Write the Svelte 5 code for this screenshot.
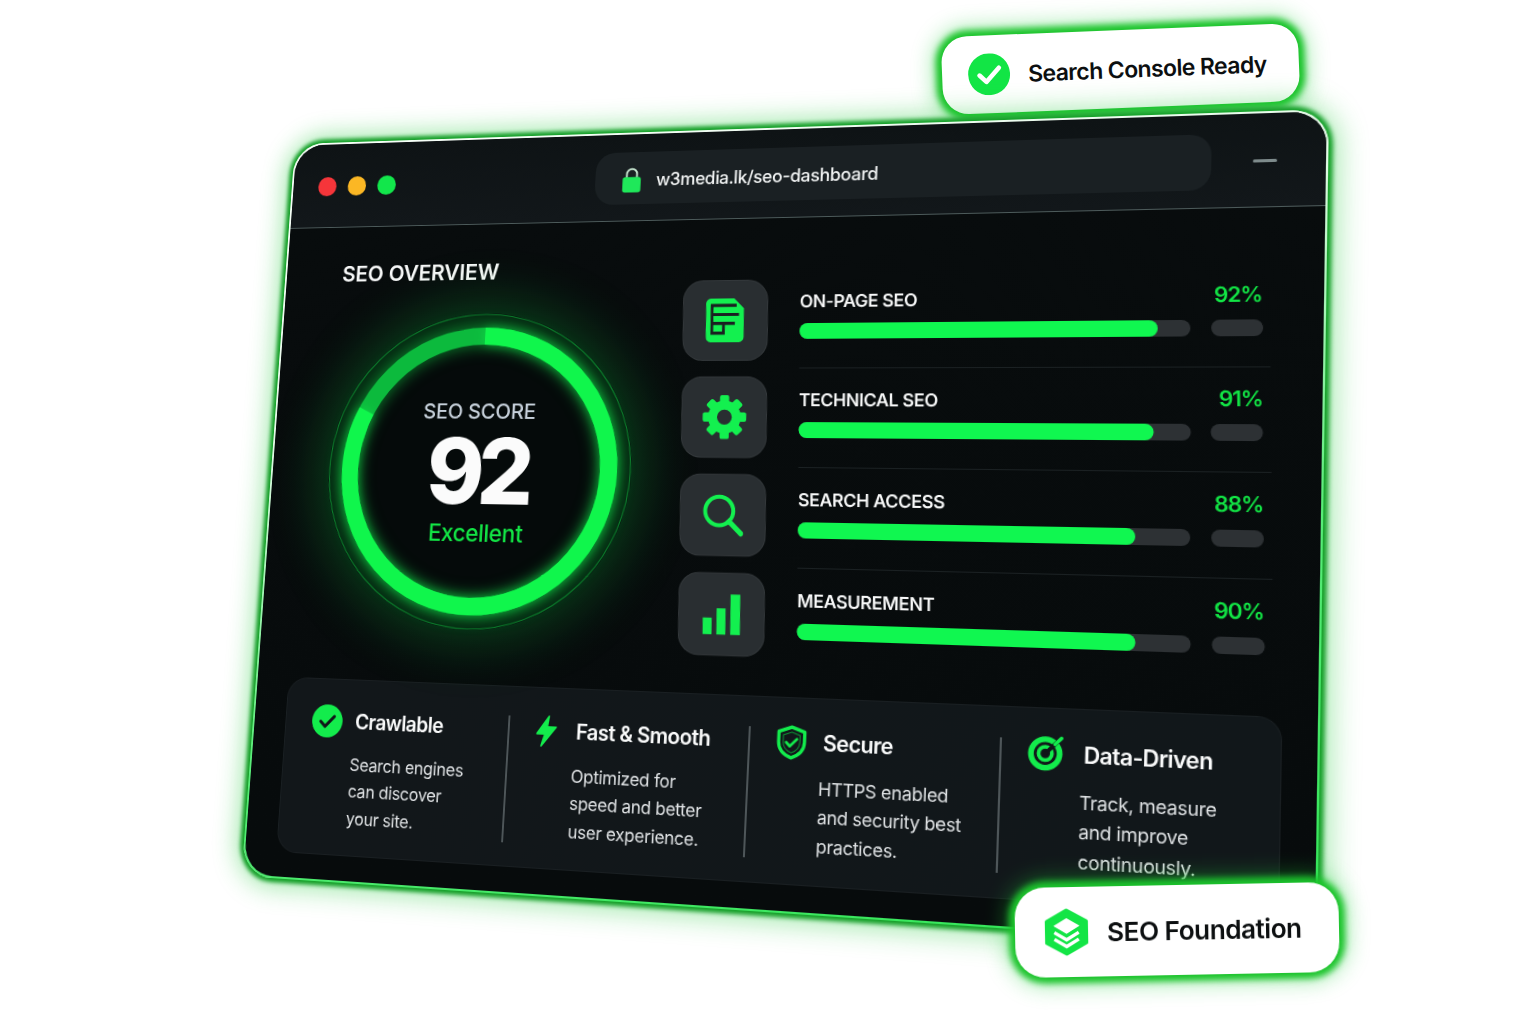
<script>
  const W = 1060;
  const H = 782;

  // where the flat window's corners land on the page
  const quad = [[295, 144], [1329, 109], [1317, 950], [241.5, 876]];

  function squareToQuad([p0, p1, p2, p3]) {
    const dx1 = p1[0] - p2[0], dx2 = p3[0] - p2[0], sx = p0[0] - p1[0] + p2[0] - p3[0];
    const dy1 = p1[1] - p2[1], dy2 = p3[1] - p2[1], sy = p0[1] - p1[1] + p2[1] - p3[1];
    const det = dx1 * dy2 - dx2 * dy1;
    const g = (sx * dy2 - dx2 * sy) / det;
    const h = (dx1 * sy - sx * dy1) / det;
    const a = p1[0] - p0[0] + g * p1[0];
    const b = p3[0] - p0[0] + h * p3[0];
    const d = p1[1] - p0[1] + g * p1[1];
    const e = p3[1] - p0[1] + h * p3[1];
    return `matrix3d(${a / W},${d / W},0,${g / W},${b / H},${e / H},0,${h / H},0,0,1,0,${p0[0]},${p0[1]},0,1)`;
  }

  const windowTransform = squareToQuad(quad);

  const metrics = [
    { icon: 'doc', label: 'ON-PAGE SEO', pct: 92, fill: 92 },
    { icon: 'gear', label: 'TECHNICAL SEO', pct: 91, fill: 91 },
    { icon: 'search', label: 'SEARCH ACCESS', pct: 88, fill: 86.500 },
    { icon: 'bars', label: 'MEASUREMENT', pct: 90, fill: 86.500 }
  ];

  const features = [
    { icon: 'check', pad: 29, title: 'Crawlable', lines: ['Search engines', 'can discover', 'your site.'] },
    { icon: 'bolt', pad: 24, title: 'Fast & Smooth', lines: ['Optimized for', 'speed and better', 'user experience.'] },
    { icon: 'shield', pad: 26, title: 'Secure', lines: ['HTTPS enabled', 'and security best', 'practices.'] },
    { icon: 'target', pad: 30, title: 'Data-Driven', lines: ['Track, measure', 'and improve', 'continuously.'] }
  ];

  const teeth = [0, 45, 90, 135, 180, 225, 270, 315];
</script>

<div class="stage">
  <div class="badge badge-top">
    <svg class="badge-check" viewBox="0 0 24 24">
      <circle cx="12" cy="12" r="12" fill="#12e545" />
      <path d="M6.500 12.500l3.800 3.800 7.400-7.800" fill="none" stroke="#fff" stroke-width="2.600" stroke-linecap="round" stroke-linejoin="round" />
    </svg>
    <span>Search Console Ready</span>
  </div>

  <div class="window" style="transform: {windowTransform}">
    <header class="titlebar">
      <div class="dots">
        <i class="dot red"></i>
        <i class="dot yellow"></i>
        <i class="dot green"></i>
      </div>
      <div class="url">
        <svg class="lock" viewBox="0 0 20 26">
          <path d="M5 12V7.500a5 5 0 0 1 10 0V12" fill="none" stroke="#c9e8d2" stroke-width="1.800" />
          <rect x="1" y="10.500" width="18" height="15" rx="2.500" fill="#1fe85a" />
        </svg>
        <span>w3media.lk/seo-dashboard</span>
      </div>
      <i class="minimize"></i>
    </header>

    <main class="main">
      <section class="overview">
        <h2>SEO OVERVIEW</h2>
        <div class="ring">
          <svg viewBox="0 0 330 330">
            <circle class="ring-band" cx="165" cy="165" r="154" />
            <circle class="ring-hair" cx="165" cy="165" r="164" />
            <circle class="ring-dim" cx="165" cy="165" r="141" />
            <circle class="ring-bright" cx="165" cy="165" r="141" pathLength="360" transform="rotate(-90 165 165)" />
          </svg>
          <div class="score">
            <span class="score-label">SEO SCORE</span>
            <span class="score-value">92</span>
            <span class="score-grade">Excellent</span>
          </div>
        </div>
      </section>

      <section class="metrics">
        {#each metrics as m, i}
          <div class="metric" style="--row: {i}">
            <div class="tile">
              {#if m.icon === 'doc'}
                <svg viewBox="0 0 24 24" class="tile-doc" preserveAspectRatio="none">
                  <path d="M3 0h14.500l6 5.500V21a3 3 0 0 1-3 3H3a3 3 0 0 1-3-3V3a3 3 0 0 1 3-3z" fill="#13f04f" />
                  <path d="M19 3.800H3.800V19H11V13.700H18M3.800 13.700H11M3.800 8.800H20.500" fill="none" stroke="#1a1f21" stroke-width="1.700" />
                </svg>
              {:else if m.icon === 'gear'}
                <svg viewBox="0 0 24 24" class="tile-gear">
                  {#each teeth as a}
                    <rect x="9.600" y="0.600" width="4.800" height="6" rx="1" fill="#13f04f" transform="rotate({a} 12 12)" />
                  {/each}
                  <circle cx="12" cy="12" r="8.600" fill="#13f04f" />
                  <circle cx="12" cy="12" r="3.900" fill="#292e31" />
                </svg>
              {:else if m.icon === 'search'}
                <svg viewBox="0 0 24 24" class="tile-search">
                  <circle cx="10" cy="10" r="8.200" fill="none" stroke="#13f04f" stroke-width="2.300" />
                  <path d="M15.800 16l6.800 6.800" fill="none" stroke="#13f04f" stroke-width="3" stroke-linecap="square" />
                </svg>
              {:else}
                <svg viewBox="0 0 24 24" class="tile-bars">
                  <rect x="1" y="14.500" width="5.200" height="9.500" fill="#13f04f" />
                  <rect x="9" y="9" width="5.200" height="15" fill="#13f04f" />
                  <rect x="17" y="1" width="5.600" height="23" fill="#13f04f" />
                </svg>
              {/if}
            </div>
            <div class="metric-body" class:last={i === metrics.length - 1}>
              <span class="metric-label">{m.label}</span>
              <span class="metric-pct">{m.pct}%</span>
              <div class="track"><div class="fill" style="width: {m.fill}%"></div></div>
              <i class="pill"></i>
            </div>
          </div>
        {/each}
      </section>
    </main>

    <section class="features">
      {#each features as f, i}
        <div class="feature" class:first={i === 0} style="padding-left: {f.pad}px">
          <div class="feature-head">
            {#if f.icon === 'check'}
              <svg viewBox="0 0 24 24" class="feature-icon">
                <circle cx="12" cy="12" r="12" fill="#13ec4c" />
                <path d="M6.800 12.400l3.600 3.600 7-7.400" fill="none" stroke="#101518" stroke-width="2.200" stroke-linecap="round" stroke-linejoin="round" />
              </svg>
            {:else if f.icon === 'bolt'}
              <svg viewBox="0 0 24 24" class="feature-icon">
                <path d="M13.500 1.500L5 14h6L8.500 22.500 19 9h-6.600l1.100-7.500z" fill="#13ec4c" stroke="#13ec4c" stroke-width="1.200" stroke-linejoin="round" />
              </svg>
            {:else if f.icon === 'shield'}
              <svg viewBox="0 0 24 24" class="feature-icon">
                <path d="M12 1.500l9 3.200v7c0 5.200-3.600 8.900-9 10.800-5.400-1.900-9-5.600-9-10.800v-7z" fill="none" stroke="#13ec4c" stroke-width="2.300" stroke-linejoin="round" />
                <path d="M12 5l5.800 2v4.800c0 3.400-2.300 5.900-5.800 7.200-3.500-1.300-5.800-3.800-5.800-7.200V7z" fill="none" stroke="#0e8a33" stroke-width="0.800" />
                <path d="M8.300 12l2.600 2.600 4.800-5" fill="none" stroke="#13ec4c" stroke-width="1.900" stroke-linecap="round" stroke-linejoin="round" />
              </svg>
            {:else}
              <svg viewBox="3 1.500 23 23" class="feature-icon">
                <circle cx="11.500" cy="12.500" r="9" fill="none" stroke="#13ec4c" stroke-width="3.600" />
                <circle cx="11.500" cy="12.500" r="4.200" fill="none" stroke="#13ec4c" stroke-width="2.400" />
                <path d="M11.500 12.500L19.500 4.500" stroke="#101518" stroke-width="2.600" />
                <path d="M17.500 6.500L21.500 2.500" stroke="#13ec4c" stroke-width="2.200" stroke-linecap="round" />
                <circle cx="11.500" cy="12.500" r="1.400" fill="#101518" />
              </svg>
            {/if}
            <h3>{f.title}</h3>
          </div>
          <p>
            {#each f.lines as line}
              <span>{line}</span>
            {/each}
          </p>
        </div>
      {/each}
    </section>
  </div>

  <div class="badge badge-bottom">
    <svg class="badge-hex" viewBox="0 0 24 26">
      <path d="M12 1.500L22.500 7.300V18.700L12 24.500 1.500 18.700V7.300z" fill="#13e545" stroke="#13e545" stroke-width="2" stroke-linejoin="round" />
      <path d="M12 5.500L19 9.700 12 13.900 5 9.700z" fill="#fff" />
      <path d="M5.500 13.200L12 17.100l6.500-3.900M5.500 16.800L12 20.700l6.500-3.900" fill="none" stroke="#fff" stroke-width="1.800" />
    </svg>
    <span>SEO Foundation</span>
  </div>
</div>

<style>
  :global(body) {
    margin: 0;
    background: #fff;
  }

  .stage {
    position: relative;
    width: 1536px;
    height: 1024px;
    overflow: hidden;
    background: #fff;
    font-family: Inter, "Liberation Sans", sans-serif;
  }

  /* floating chips */
  .badge {
    position: absolute;
    display: flex;
    align-items: center;
    box-sizing: border-box;
    background: #fff;
    color: #0c0f10;
    font-weight: 600;
    box-shadow: 0 0 6px 6px #1cc42c, 0 0 20px 10px rgba(34, 205, 60, 0.36);
  }

  .badge-top {
    left: 942px;
    top: 30px;
    width: 357px;
    height: 78px;
    padding-left: 26px;
    gap: 18px;
    border-radius: 26px;
    font-size: 23px;
    letter-spacing: -0.6px;
    transform: rotate(-2.3deg);
  }

  .badge-top span {
    padding-top: 2px;
  }

  .badge-check {
    width: 42px;
    height: 42px;
    flex: none;
  }

  .badge-bottom {
    left: 1015px;
    top: 885px;
    width: 324px;
    height: 90px;
    padding-left: 29px;
    gap: 18px;
    border-radius: 30px;
    font-size: 26.200px;
    letter-spacing: -0.500px;
    transform: rotate(-1.1deg);
  }

  .badge-hex {
    width: 45px;
    height: 50px;
    flex: none;
  }

  /* browser window, laid out flat and then tilted */
  .window {
    position: absolute;
    left: 0;
    top: 0;
    display: flex;
    flex-direction: column;
    box-sizing: border-box;
    width: 1060px;
    height: 782px;
    border: 2.500px solid transparent;
    border-radius: 34px;
    background:
      linear-gradient(#080c0d, #070b0c) padding-box,
      linear-gradient(165deg, #f8fff9 0%, #e6fae9 30%, #5aec79 62%, #2fe655 100%) border-box;
    box-shadow: 0 0 4px 3.500px #149f28, 0 0 26px 9px rgba(30, 200, 55, 0.4);
    transform-origin: 0 0;
    color: #fff;
  }

  .titlebar {
    position: relative;
    display: flex;
    align-items: center;
    box-sizing: border-box;
    flex: none;
    height: 92px;
    padding: 2px 0 0 29px;
    border-bottom: 1.500px solid #4d5b5b;
    border-radius: 32px 32px 0 0;
    background: linear-gradient(#0e1315, #12171a);
  }

  .dots {
    display: flex;
    gap: 13px;
  }

  .dot {
    width: 21px;
    height: 21px;
    border-radius: 50%;
  }

  .red { background: #f5353a; }
  .yellow { background: #fbb724; }
  .green { background: #12e64b; }

  .url {
    display: flex;
    align-items: center;
    box-sizing: border-box;
    width: 613px;
    height: 55px;
    margin: 0 0 0 221px;
    padding: 4px 0 0 28px;
    gap: 15px;
    border-radius: 20px;
    background: #1a2023;
    font-size: 18px;
    font-weight: 500;
    letter-spacing: -0.350px;
    color: #f2f4f4;
  }

  .lock {
    width: 22px;
    height: 28px;
    flex: none;
    margin-top: -2px;
  }

  .minimize {
    width: 22px;
    height: 3px;
    margin-left: 38px;
    border-radius: 2px;
    background: #7e8b8c;
  }

  .main {
    display: grid;
    grid-template-columns: 436px 1fr;
    flex: none;
    height: 477px;
    padding-right: 47px;
  }

  .overview {
    padding: 37px 0 0 64px;
  }

  h2 {
    margin: 0 0 30px;
    font-size: 23.300px;
    line-height: 28px;
    font-weight: 600;
    letter-spacing: -0.1px;
    color: #f7f8f8;
  }

  .ring {
    position: relative;
    width: 330px;
    height: 330px;
    border-radius: 50%;
    box-shadow: 0 0 56px 12px rgba(16, 214, 70, 0.26);
    background: radial-gradient(circle, #050a0a 0 55%, #05220f 78%, #06301680 100%);
  }

  .ring svg {
    position: absolute;
    inset: 0;
    overflow: visible;
  }

  .ring circle {
    fill: none;
  }

  .ring-band {
    stroke: rgba(6, 52, 22, 0.55);
    stroke-width: 20;
  }

  .ring-hair {
    stroke: #0d7a2c;
    stroke-width: 1.200;
  }

  .ring-dim {
    stroke: #0cba3d;
    stroke-width: 18;
    filter: drop-shadow(0 0 9px rgba(16, 240, 76, 0.55));
  }

  .ring-bright {
    stroke: #10f64c;
    stroke-width: 18;
    stroke-dasharray: 296 64;
    filter: drop-shadow(0 0 6px rgba(16, 240, 76, 0.55));
  }

  .score {
    position: absolute;
    inset: 5px 0 0;
    display: flex;
    flex-direction: column;
    align-items: center;
    justify-content: center;
  }

  .score-label {
    padding-right: 3px;
    margin-bottom: 1px;
    font-size: 22px;
    line-height: 26px;
    font-weight: 500;
    letter-spacing: -0.2px;
    color: #c6d0da;
  }

  .score-value {
    font-size: 95px;
    line-height: 98px;
    font-weight: 800;
    letter-spacing: -7px;
    color: #fbfbfb;
  }

  .score-grade {
    padding-left: 4px;
    font-size: 24.500px;
    line-height: 30px;
    font-weight: 500;
    letter-spacing: -0.4px;
    color: #12e545;
  }

  .metrics {
    padding-top: 54px;
    transform: skewX(2deg);
    transform-origin: 0 0;
  }

  .metric {
    display: grid;
    grid-template-columns: 88px 1fr;
    column-gap: 32px;
    align-items: center;
    height: 100px;
  }

  .tile {
    display: flex;
    align-items: center;
    justify-content: center;
    box-sizing: border-box;
    height: 83px;
    border: 1px solid rgba(255, 255, 255, 0.05);
    border-radius: 21px;
    background: #292e31;
    translate: 0 calc(0px - var(--row) * 1.200px);
  }

  .tile-doc { width: 40px; height: 45px; }
  .tile-gear { width: 47px; height: 47px; }
  .tile-search { width: 42px; height: 44px; }
  .tile-bars { width: 43px; height: 42px; }

  .metric-body {
    display: grid;
    grid-template-columns: calc(376px - var(--row) * 1.300px) 47px;
    grid-template-rows: 24px 16px;
    column-gap: 18.500px;
    row-gap: 10px;
    align-content: start;
    box-sizing: border-box;
    width: calc(448px - var(--row) * 1px);
    height: 100px;
    padding-top: 20px;
    border-bottom: 1.500px solid #1b2123;
  }

  .metric-body.last {
    border-bottom: 0;
  }

  .metric-label {
    font-size: 17.700px;
    line-height: 24px;
    font-weight: 600;
    letter-spacing: -0.400px;
    color: #f8f9f9;
  }

  .metric-pct {
    justify-self: end;
    margin-top: -2px;
    font-size: 20.500px;
    line-height: 24px;
    font-weight: 600;
    letter-spacing: -1px;
    white-space: nowrap;
    color: #12e545;
  }

  .track {
    height: 16px;
    border-radius: 8px;
    background: #2d3134;
  }

  .fill {
    height: 100%;
    border-radius: 8px;
    background: #10f750;
  }

  .pill {
    border-radius: 8px;
    background: #2d3134;
  }

  /* bottom strip */
  .features {
    display: grid;
    grid-template-columns: 243px 248px 243px 1fr;
    box-sizing: border-box;
    flex: none;
    width: 990px;
    height: 181px;
    margin: 2.500px 0 0 35px;
    border-radius: 22px;
    border: 1px solid rgba(255, 255, 255, 0.035);
    background: linear-gradient(100deg, #12171a, #11171a);
  }

  .feature {
    position: relative;
    padding-top: 25px;
  }

  .feature:not(.first)::before {
    content: '';
    position: absolute;
    left: 0;
    top: 29px;
    width: 1.500px;
    height: 127px;
    background: #4e5659;
  }

  .feature-head {
    display: flex;
    align-items: center;
    gap: 14px;
    height: 36px;
  }

  .feature-icon {
    width: 34px;
    height: 34px;
    flex: none;
    overflow: visible;
  }

  h3 {
    margin: 0;
    font-size: 21px;
    line-height: 30px;
    font-weight: 600;
    letter-spacing: -0.600px;
    color: #fafbfb;
  }

  p {
    margin: 12px 0 0 45px;
    font-size: 17.500px;
    line-height: 27.500px;
    font-weight: 400;
    letter-spacing: -0.300px;
    color: #dfe2e4;
  }

  p span {
    display: block;
    white-space: nowrap;
  }
</style>
